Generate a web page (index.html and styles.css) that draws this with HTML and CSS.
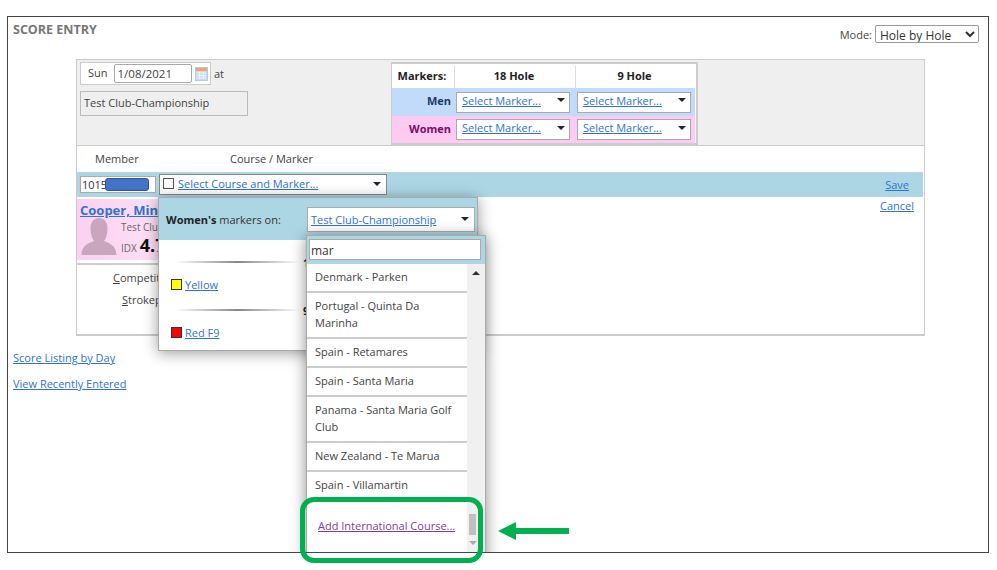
FILE: index.html
```html
<!DOCTYPE html>
<html lang="en">
<head>
<meta charset="utf-8">
<title>Score Entry</title>
<link rel="stylesheet" href="styles.css">
</head>
<body>
<main class="frame">
  <header class="top">
    <h1 class="title">SCORE ENTRY</h1>
    <label class="mode">Mode:
      <select class="mode-select"><option>Hole by Hole</option></select>
    </label>
  </header>
  <section class="panel">
    <div class="setup">
      <div class="setup-left">
        <div class="date-row">
          <div class="date-box">
            <span class="day">Sun</span><input class="date-input" value="1/08/2021">
            <svg class="cal" width="13" height="14" viewBox="0 0 13 14"><rect x=".5" y=".5" width="12" height="13" fill="#c9def3" stroke="#b4cbe2"/><rect x="1" y="1" width="11" height="3" fill="#f2a468"/><path d="M2 6h9M2 8.500h9M2 11h9M4.500 5v7M8.500 5v7" stroke="#eaf2fa"/></svg>
          </div>
          <span class="at">at</span>
        </div>
        <div class="club-box">Test Club-Championship</div>
      </div>
      <div class="markers">
        <div class="m-head m-label">Markers:</div>
        <div class="m-head m-col">18 Hole</div>
        <div class="m-head m-col">9 Hole</div>
        <div class="m-side men">Men</div>
        <div class="m-cell men"><div class="dd dd-m"><a href="#">Select Marker...</a><i class="caret"></i></div></div>
        <div class="m-cell men"><div class="dd dd-m"><a href="#">Select Marker...</a><i class="caret"></i></div></div>
        <div class="m-side women">Women</div>
        <div class="m-cell women"><div class="dd dd-m"><a href="#">Select Marker...</a><i class="caret"></i></div></div>
        <div class="m-cell women"><div class="dd dd-m"><a href="#">Select Marker...</a><i class="caret"></i></div></div>
      </div>
    </div>
    <div class="cols"><span class="col-member">Member</span><span>Course / Marker</span></div>
    <div class="entry">
      <div class="member-input"><span>1015</span><i class="redact"></i></div>
      <div class="dd dd-course"><i class="check"></i><a href="#">Select Course and Marker...</a><i class="caret"></i></div>
      <a class="save" href="#">Save</a>
    </div>
    <div class="detail">
      <div class="card">
        <a class="name" href="#">Cooper, Min</a>
        <div class="card-body">
          <svg class="avatar" width="36" height="37" viewBox="0 0 36 37"><path d="M18 0c5 0 8.500 4 8.500 10 0 5-1 10-3.500 13 4 2 12 3 12.500 14H.5C1 26 9 25 13 23 10.500 20 9.500 15 9.500 10 9.500 4 13 0 18 0z" fill="#c9a6bd"/></svg>
          <div class="card-text">
            <div class="club">Test Clu</div>
            <div class="idx">IDX <b>4.7</b></div>
          </div>
        </div>
      </div>
      <a class="cancel" href="#">Cancel</a>
    </div>
    <div class="format">
      <div class="format-row fr1"><u>C</u>ompetiti</div>
      <div class="format-row fr2"><u>S</u>trokep</div>
    </div>
  </section>
  <nav class="links">
    <a href="#">Score Listing by Day</a>
    <a href="#">View Recently Entered</a>
  </nav>

  <div class="pop-markers">
    <div class="pm-head">
      <span class="pm-title"><b>Women's</b> markers on:</span>
      <div class="dd dd-club"><a href="#">Test Club-Championship</a><i class="caret"></i></div>
    </div>
    <div class="pm-group"><i class="rule"></i><span class="holes">1</span></div>
    <div class="pm-item"><i class="swatch yellow"></i><a href="#">Yellow</a></div>
    <div class="pm-group g2"><i class="rule"></i><span class="holes">9</span></div>
    <div class="pm-item"><i class="swatch red"></i><a href="#">Red F9</a></div>
  </div>

  <div class="pop-course">
    <div class="pc-search"><input class="pc-input" value="mar"></div>
    <div class="pc-body">
      <ul class="pc-list">
        <li>Denmark - Parken</li>
        <li>Portugal - Quinta Da Marinha</li>
        <li>Spain - Retamares</li>
        <li>Spain - Santa Maria</li>
        <li>Panama - Santa Maria Golf Club</li>
        <li>New Zealand - Te Marua</li>
        <li>Spain - Villamartin</li>
        <li class="add"><a href="#">Add International Course...</a></li>
      </ul>
      <div class="scroll"><i class="up"></i><i class="thumb"></i><i class="down"></i></div>
    </div>
  </div>
</main>
<div class="callout"></div>
<svg class="arrow" width="72" height="20" viewBox="0 0 72 20"><path d="M0 10 18 1v6h53v6H18v6z" fill="#00b050"/></svg>
</body>
</html>
```
FILE: styles.css
```css
* { box-sizing: border-box; }
html, body { height: 100%; }
body {
  margin: 0;
  padding: 16px 8px 0 7px;
  background: #fff;
  font: 11px/15px "Open Sans", sans-serif;
  color: #444;
  overflow: hidden;
  position: relative;
}
a { color: #2f74d0; text-decoration: underline; }
i { display: block; }

.frame {
  position: relative;
  width: 982px;
  height: 537px;
  border: 1.5px solid #444;
  overflow: hidden;
  background: #fff;
}
.top {
  display: flex;
  justify-content: space-between;
  align-items: flex-start;
  height: 42px;
  padding: 5px 9px 0 5px;
}
.title { margin: 0; font-size: 12.5px; line-height: 15px; font-weight: 700; color: #777; }
.mode { display: flex; align-items: center; gap: 3px; margin-top: 3px; }
.mode-select {
  width: 104px; height: 18px; padding: 0;
  font: 12px "Open Sans", sans-serif; color: #333;
  background: #fff; border: 1px solid #999; border-radius: 2px;
}

.panel {
  width: 849px;
  height: 277px;
  margin-left: 68px;
  border: 1px solid #ccc;
  border-bottom-width: 2px;
}
.setup {
  display: flex;
  height: 86px;
  padding: 2px 3px 0;
  background: #efefef;
  border-bottom: 1px solid #ccc;
}
.setup-left { width: 311px; }
.date-row { display: flex; align-items: center; height: 23px; }
.date-box {
  display: flex; align-items: center; gap: 6px;
  width: 131px; height: 23px; padding-left: 7px;
  background: #fff; border: 1px solid #ccc;
}
.day { padding-bottom: 2px; }
.date-input {
  width: 78px; height: 19px; padding: 0 3px;
  font: 11.5px "Open Sans", sans-serif; color: #444;
  border: 1px solid #aaa; border-radius: 2px; background: #fff;
}
.cal { margin-left: -3px; }
.at { margin-left: 3px; }
.club-box {
  width: 168px; height: 25px; margin-top: 6px; padding: 3px;
  border: 1px solid #bbb; font-size: 11px;
}

.markers {
  display: grid;
  grid-template-columns: 62px 121px 120px;
  grid-template-rows: 22px 28px 27px;
  width: 307px; height: 83px;
  padding: 2px 0 0 0;
  border: 2px solid #ccc;
  border-left-width: 1.5px;
  background: #fff;
}
.m-head {
  display: flex; align-items: center; justify-content: center;
  padding: 0 2px 4px 0;
  font-weight: 700; color: #222;
}
.m-col { border-left: 1px solid #ddd; }
.m-side { display: flex; align-items: center; justify-content: flex-end; padding: 0 3px 3px 0; font-weight: 700; }
.m-side.men { color: #1b3a68; }
.m-side.women { color: #7a0c68; }
.men { background: #c2dbfb; }
.women { background: #fdcbf1; }
.m-cell { display: flex; align-items: center; padding-left: 2px; }

.dd {
  display: flex; align-items: center;
  padding-bottom: 2px;
  background: #fff; border: 1px solid #aaa;
}
.caret {
  width: 0; height: 0; margin-left: auto;
  border-left: 4px solid transparent;
  border-right: 4px solid transparent;
  border-top: 4px solid #223;
}
.dd-m { width: 114px; height: 21px; padding: 0 4px 4px 5px; }

.cols { display: flex; height: 26px; align-items: center; padding: 0 0 2px 18px; }
.col-member { width: 135px; }
.entry {
  display: flex; align-items: center;
  height: 25px; margin-right: 1px; padding: 0 14px 0 3px;
  background: #add6e4;
}
.member-input {
  display: flex; align-items: center;
  width: 76px; height: 17px; padding-left: 1px;
  background: #fff; border: 1px solid #aaa;
  font-size: 11px; color: #333;
}
.redact {
  width: 44px; height: 13px; margin-left: -2px;
  background: #4472c4; border: 1px solid #2f5597; border-radius: 3px;
}
.dd-course { width: 228px; height: 21px; margin-left: 3px; padding-left: 3px; padding-right: 5px; border-color: #888; }
.check { width: 11px; height: 11px; margin-right: 4px; border: 1px solid #555; background: #fbfbfb; }
.save { margin-left: auto; }

.detail { display: flex; justify-content: space-between; height: 66px; padding: 1px 10px 0 0; }
.card {
  width: 240px; height: 61px; margin-top: 1px; padding: 4px 0 0 3px;
  background: linear-gradient(90deg, #fcd0f1, #fff);
}
.name { display: block; font-size: 13px; line-height: 15px; font-weight: 700; }
.card-body { display: flex; gap: 4px; padding: 0 0 0 1px; }
.club { font-size: 10px; line-height: 14px; color: #666; margin-top: 2px; }
.idx { font-size: 10px; color: #666; line-height: 22px; display: flex; align-items: baseline; gap: 3px; }
.idx b { font-size: 18px; color: #111; }
.format {
  width: 300px; height: 73px;
  border-top: 2px solid #ccc;
}
.format-row { line-height: 16px; }
.fr1 { padding: 5px 0 0 36px; }
.fr2 { padding: 6px 0 0 45px; }

.links { display: flex; flex-direction: column; gap: 11px; padding: 14px 0 0 5px; }

.pop-markers {
  position: absolute; left: 150px; top: 180px;
  width: 320px; height: 154px;
  background: #fff; border: 1px solid #aaa;
  box-shadow: 0 2px 14px rgba(0,0,0,.4);
}
.pm-head {
  display: flex; align-items: center; justify-content: space-between;
  height: 42px; padding: 0 2px 0 7px;
  background: #add6e4;
}
.pm-title { color: #333; }
.pm-title b { color: #222; }
.dd-club { width: 168px; height: 25px; padding: 0 5px 0 3px; }
.pm-group { display: flex; align-items: center; gap: 3px; height: 16px; margin-top: 14px; padding-left: 16px; white-space: nowrap; font-weight: 700; color: #222; }
.pm-group.g2 { margin-top: 10px; }
.rule { width: 125px; height: 2px; background: linear-gradient(90deg, transparent, #888 50%, transparent); }
.pm-item { display: flex; align-items: center; gap: 3px; height: 16px; margin-top: 6px; padding-left: 12px; }
.swatch { width: 11px; height: 11px; border: 1px solid #333; }
.yellow { background: #ff0; }
.red { background: #f00; }

.pop-course {
  position: absolute; left: 298px; top: 218px;
  width: 180px; height: 330px;
  background: #fff; border: 1px solid #aaa;
  box-shadow: 0 2px 14px rgba(0,0,0,.45);
}
.pc-search { height: 28px; padding: 3px 4px 0 2px; background: #add6e4; }
.pc-input {
  display: block; width: 172px; height: 21px; padding: 1px 1px 0;
  font: 12px "Open Sans", sans-serif; color: #333;
  background: #fff; border: 1px solid #aaa;
}
.pc-body { display: flex; height: 300px; }
.pc-list { width: 160px; margin: 0; padding: 0; list-style: none; }
.pc-list li { padding: 4px 8px 6px; line-height: 17px; border-bottom: 2px solid #ccc; color: #444; }
.pc-list li.add { padding: 16px 11px 0; border-bottom: 0; }
.add a { color: #7a3f9e; }
.scroll { position: relative; flex: 1; background: #f0f0f0; }
.up, .down {
  position: absolute; width: 0; height: 0;
  border-left: 4px solid transparent;
  border-right: 4px solid transparent;
}
.up { left: 5px; top: 7px; border-bottom: 4px solid #333; }
.down { left: 2px; top: 277px; border-top: 4px solid #aaa; }
.thumb { position: absolute; left: 2px; top: 250px; width: 7px; height: 21px; background: #c0c0c0; }

.callout {
  position: absolute; left: 300px; top: 497px;
  width: 183px; height: 66px;
  border: 5px solid #00b050; border-radius: 14px;
}
.arrow { position: absolute; left: 498px; top: 521px; }
```
